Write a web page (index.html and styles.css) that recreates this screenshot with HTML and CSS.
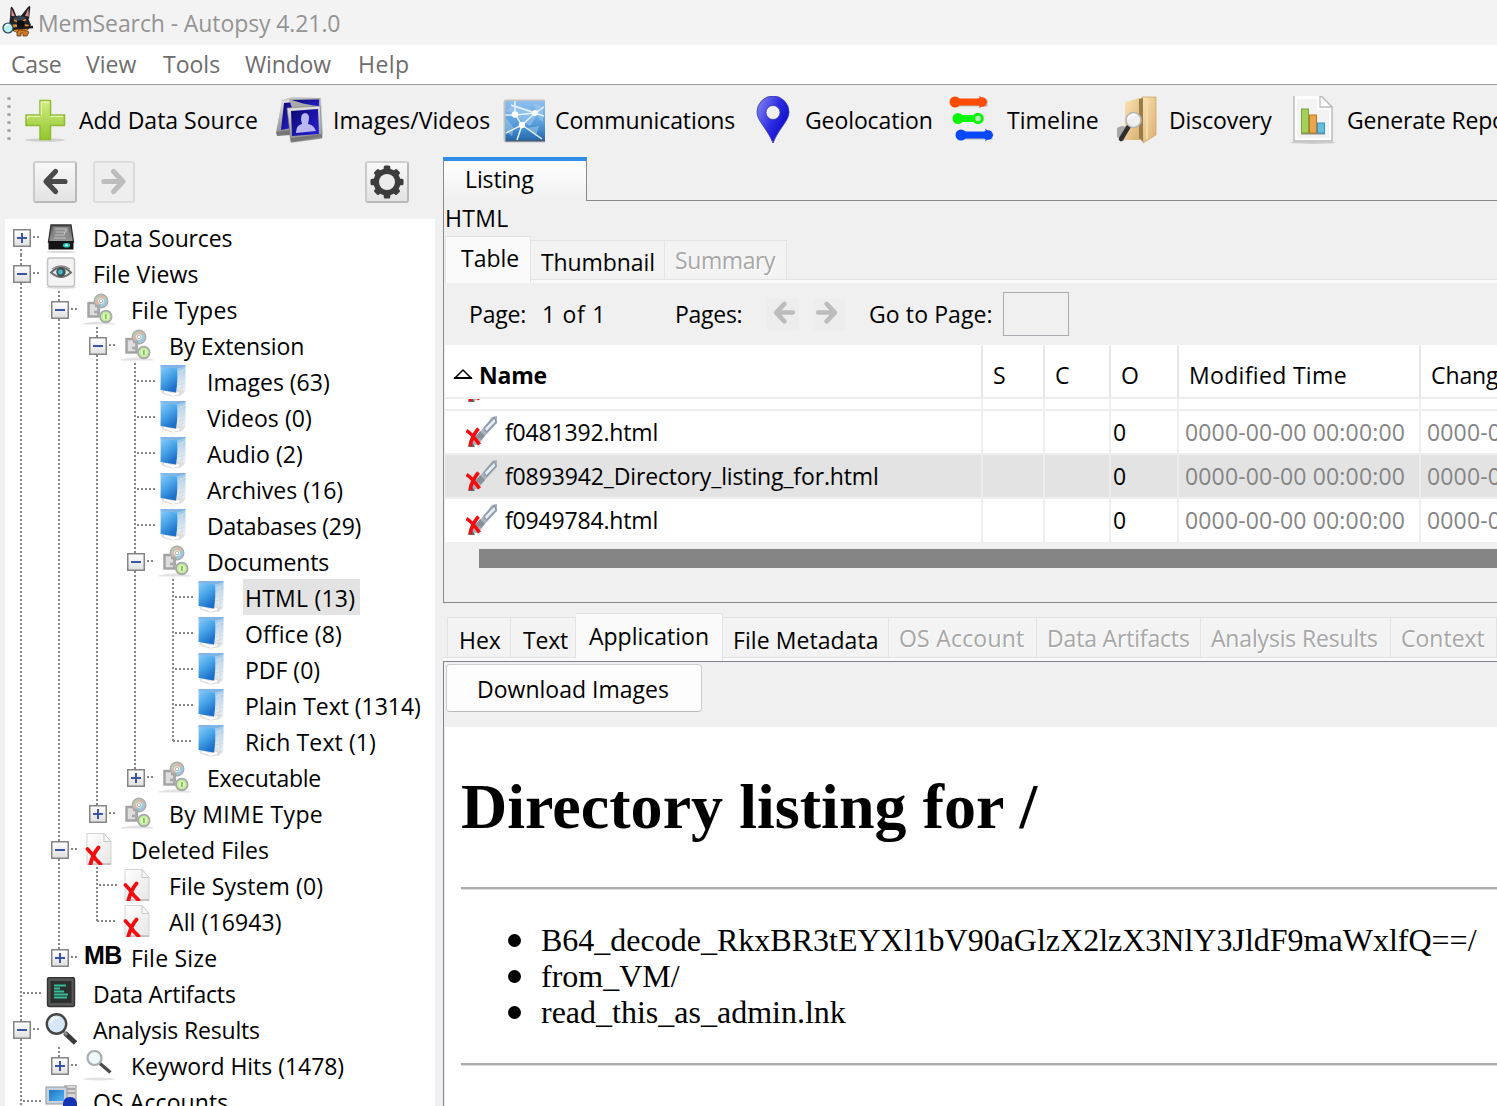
FILE: index.html
```html
<!DOCTYPE html>
<html lang="en">
<head>
<meta charset="utf-8">
<title>MemSearch - Autopsy 4.21.0</title>
<link rel="stylesheet" href="styles.css">
</head>
<body>
<svg class="defs" aria-hidden="true">
  <defs>
    <linearGradient id="gPlus" x1="0" y1="0" x2="0" y2="1"><stop offset="0" stop-color="#d2ec86"/><stop offset="1" stop-color="#94c52c"/></linearGradient>
    <linearGradient id="gNavy" x1="0" y1="0" x2="1" y2="1"><stop offset="0" stop-color="#0a0870"/><stop offset="1" stop-color="#2a20d8"/></linearGradient>
    <linearGradient id="gSilver" x1="0" y1="0" x2="0" y2="1"><stop offset="0" stop-color="#e4e4e4"/><stop offset="1" stop-color="#8c8c8c"/></linearGradient>
    <linearGradient id="gSky" x1="0" y1="0" x2="0" y2="1"><stop offset="0" stop-color="#8fc0ee"/><stop offset=".55" stop-color="#5a9fdb"/><stop offset="1" stop-color="#2166ac"/></linearGradient>
    <linearGradient id="gPin" x1="0" y1="0" x2="1" y2=".6"><stop offset="0" stop-color="#8a8af5"/><stop offset=".6" stop-color="#2a2ae0"/><stop offset="1" stop-color="#0c0cc8"/></linearGradient>
    <linearGradient id="gTan" x1="0" y1="0" x2="1" y2="1"><stop offset="0" stop-color="#fce3b4"/><stop offset="1" stop-color="#d9b070"/></linearGradient>
    <linearGradient id="gFolder" x1="0" y1="0" x2=".5" y2="1"><stop offset="0" stop-color="#8fcdf8"/><stop offset=".5" stop-color="#4ba6ea"/><stop offset="1" stop-color="#1c70c8"/></linearGradient>
    <linearGradient id="gLid" x1="0" y1="0" x2="0" y2="1"><stop offset="0" stop-color="#8fc4f0"/><stop offset=".5" stop-color="#cfe5f7"/><stop offset="1" stop-color="#f4f4f4"/></linearGradient>
    <linearGradient id="gPaper" x1="0" y1="0" x2="1" y2="1"><stop offset="0" stop-color="#ffffff"/><stop offset="1" stop-color="#e6e6e6"/></linearGradient>
    <linearGradient id="gDisc" x1="0" y1="0" x2="1" y2="1"><stop offset="0" stop-color="#a9d8b8"/><stop offset=".4" stop-color="#e8b0a0"/><stop offset=".7" stop-color="#8fd6d8"/><stop offset="1" stop-color="#b9b6e6"/></linearGradient>
    <linearGradient id="gBox" x1="0" y1="0" x2="0" y2="1"><stop offset="0" stop-color="#ffffff"/><stop offset="1" stop-color="#dfdfdf"/></linearGradient>
    <linearGradient id="gDrive" x1="0" y1="0" x2="0" y2="1"><stop offset="0" stop-color="#5a5a5a"/><stop offset="1" stop-color="#9a9a9a"/></linearGradient>
    <linearGradient id="gScreen" x1="0" y1="0" x2="1" y2="1"><stop offset="0" stop-color="#1b74c4"/><stop offset="1" stop-color="#58b4f2"/></linearGradient>

    <symbol id="dog" viewBox="0 0 32 32">
      <path d="M8 13 8.500 3Q9 -2 12 4l3 8zM18 11 26 1q3-3 2 3l-1 9z" fill="#191c24"/>
      <path d="M9.500 10 9.500 2.500l3.500 8zM23 10l3.500-8 .2 8.500z" fill="#d98f86"/>
      <path d="M8 12q9-5 18 0l3 7-3 5-8 4-7-3-4-6z" fill="#20242e"/>
      <path d="M11 12q7-4 13 0l-3 2h-7z" fill="#3b4452"/>
      <path d="M12 14l3 1.500M24 13.500l-3 1.500" stroke="#e58a2c" stroke-width="1.600"/>
      <path d="M10 19q4-2 7 1 5-3 10-1l-2 6q-7 3-13 0z" fill="#e58a2c"/>
      <path d="M15 15h7l1 6-4 2-4-2z" fill="#0c0e13"/>
      <path d="M8 23 31 21" stroke="#1a1a1a" stroke-width="2.400"/>
      <path d="M15 26v4h4v-3h2v3h4l2-4-5-2-5 0z" fill="#d27a22" stroke="#512a08" stroke-width=".7"/>
      <circle cx="6" cy="22" r="5" fill="#b6eef8" stroke="#26414c" stroke-width="1.200"/>
      <path d="M3 21q1-3 4-2" stroke="#fff" fill="none" stroke-width="1.200"/>
    </symbol>

    <symbol id="plus" viewBox="0 0 48 48">
      <ellipse cx="23" cy="44" rx="20" ry="1.800" fill="#d0d0d0"/>
      <path d="M18 4.500h10.500v14.500h14v10.500h-14v14H18v-14H4V19h14z" fill="url(#gPlus)" stroke="#8fba31" stroke-width="1.500"/>
      <path d="M19.300 19V6h8M5.500 23v-2.700h13M29 20.300h12" stroke="#e4f5b2" stroke-width="1.300" fill="none"/>
    </symbol>

    <symbol id="photos" viewBox="0 0 48 48">
      <path d="M7 4 17 1l29 1 2 36-3 5-29 4-2-8L1 38z" fill="#9c9c9c" opacity=".45"/>
      <path d="M7 5 22 3l-4 35L1 37z" fill="url(#gSilver)"/>
      <path d="M9 7l10-1-3 26-10 2z" fill="url(#gNavy)"/>
      <path d="M14 3 45 2l1 14-27 2z" fill="#a9a9a9"/>
      <path d="M17 4l27-.5v7L28 7.500z" fill="url(#gNavy)"/>
      <path d="M12 12l33-2 2 32-31 4z" fill="url(#gSilver)" stroke="#7a7a7a" stroke-width=".6"/>
      <path d="M16 15l27-2 1 25-27 2z" fill="url(#gNavy)"/>
      <path d="M21 37q0-8 6-9-3-10 3-11 6 0 3 11 6 1 8 7z" fill="#b9b6f2"/>
      <path d="M1 36l14-2v5L2 40zM16 42l31-4v3l-31 5z" fill="#777"/>
    </symbol>

    <symbol id="network" viewBox="0 0 48 48">
      <rect x="6.500" y="3.500" width="43" height="43" rx="3" fill="#c2c2c2"/>
      <rect x="8.500" y="5" width="39.500" height="40" rx="2" fill="url(#gSky)"/>
      <path d="M8.500 43.500h39.500v2H8.500z" fill="#3f5f80"/>
      <path d="M9 15q8-10 18-3l7 1 5 8-6 9-7-4-6-5zM37 8l9 2v16l-5-4zM9 22l8 10-2 8-6-5zM30 32l12-2-3 10z" fill="#a8d0f2" opacity=".5"/>
      <path d="M18 5v13l7 11-5 15M8.500 19l9.500 0 20-2 9-6M25 29l13-12 9 3M25 29 9 37M25 29l20 14M14 9l24 8" stroke="#e6f3fe" stroke-width="1.500" fill="none"/>
      <circle cx="18" cy="18.500" r="3.200" fill="#fff"/><circle cx="38" cy="17" r="2.900" fill="#fff"/><circle cx="25" cy="29" r="3.200" fill="#fff"/>
    </symbol>

    <symbol id="pin" viewBox="0 0 48 48">
      <path fill-rule="evenodd" d="M25 0a16 16 0 0 1 16 16c0 9-10 16-16 31C19 32 9 25 9 16A16 16 0 0 1 25 0zm0 9.500a7 7 0 1 0 0 14 7 7 0 0 0 0-14z" fill="url(#gPin)" stroke="#3a3aa8" stroke-width=".8"/>
    </symbol>

    <symbol id="timeline" viewBox="0 0 48 48">
      <g opacity=".35" fill="#555" transform="translate(1.500 1.500)"><rect x="5" y="2" width="32" height="7"/><rect x="10" y="35" width="32" height="7"/></g>
      <path d="M6 2.500h25l-1-3 8.500 6.500-8.500 6.500 1-3H6z" fill="#ff4c05"/><circle cx="6" cy="6" r="5.500" fill="#ff4c05"/><circle cx="33" cy="6" r="4.800" fill="#ff4c05"/>
      <path d="M9 19h15v7H9z" fill="#08f808"/><circle cx="9" cy="22.500" r="5.500" fill="#08f808"/><circle cx="29" cy="22.500" r="4.300" fill="#bfe6bf" stroke="#08f808" stroke-width="3"/>
      <path d="M11 35.500h26l-1-3 8.500 6.500-8.500 6.500 1-3H11z" fill="#0848fb"/><circle cx="12" cy="39" r="5.500" fill="#0848fb"/><circle cx="39" cy="39" r="4.800" fill="#0848fb"/>
    </symbol>

    <symbol id="discovery" viewBox="0 0 48 48">
      <path d="M14 6 29 2v42l-15 0z" fill="url(#gTan)"/>
      <path d="M31 1l14 0v38l-13 8z" fill="url(#gTan)" stroke="#c9a266" stroke-width=".7"/>
      <path d="M28 3l4-1v44l-4-4z" fill="#9a7c4c"/>
      <path d="M36 3v40" stroke="#f7dca8" stroke-width="2"/>
      <path d="M6 32q6-4 11 0l-4 13-7-4z" fill="#777" opacity=".6"/>
      <path d="M18 30 10 43" stroke="#2e2e2e" stroke-width="4.500" stroke-linecap="round"/>
      <circle cx="22.500" cy="24" r="7.500" fill="#efefef" stroke="#b5b5b5" stroke-width="1.600"/>
      <path d="M17 23q2-5 8-4" stroke="#fff" stroke-width="2" fill="none"/>
    </symbol>

    <symbol id="report" viewBox="0 0 48 48">
      <ellipse cx="24" cy="46.500" rx="23" ry="1.500" fill="#cfcfcf"/>
      <path d="M5 -1h26l12 12v34H5z" fill="#fdfdfd" stroke="#bcbcbc" stroke-width="1.500"/>
      <path d="M8 3h20v11h12v28H8z" fill="#f3f3f3"/>
      <path d="M31 -1v12h12z" fill="#fff" stroke="#bcbcbc" stroke-width="1.300"/>
      <path d="M12 37.500h24" stroke="#8b8b8b" stroke-width="2"/>
      <rect x="12.500" y="13" width="7" height="24" fill="#a4cf5a" stroke="#7ba436"/>
      <rect x="20.500" y="19" width="7" height="18" fill="#eda54d" stroke="#bf7624"/>
      <rect x="28.500" y="27" width="7" height="10" fill="#65bfe2" stroke="#3794bd"/>
    </symbol>

    <symbol id="arrow" viewBox="0 0 32 32">
      <path d="M16.500 5.500 7 15.500 16.500 25.500M8 15.500h18" fill="none" stroke="currentColor" stroke-width="5.200" stroke-linejoin="round" stroke-linecap="round"/>
    </symbol>

    <symbol id="gear" viewBox="0 0 36 36">
      <g fill="#3c3c3c"><circle cx="18" cy="18" r="13.500"/>
      <rect x="14.700" y="1.500" width="6.600" height="33" rx="1.500"/><rect x="1.500" y="14.700" width="33" height="6.600" rx="1.500"/>
      <rect x="14.700" y="2" width="6.600" height="32" rx="1.500" transform="rotate(45 18 18)"/><rect x="14.700" y="2" width="6.600" height="32" rx="1.500" transform="rotate(-45 18 18)"/></g>
      <circle cx="18" cy="18" r="8" fill="#ececec"/>
    </symbol>

    <symbol id="drive" viewBox="0 0 32 32">
      <ellipse cx="16" cy="31" rx="15" ry="1.200" fill="#dcdcdc"/>
      <path d="M6 4h20l2.500 17h-25z" fill="url(#gDrive)" stroke="#333" stroke-width="1.300"/>
      <path d="M8.500 6h15l1.500 12H7.500z" fill="#8b8b8b"/>
      <path d="M10 8h11v3H11M10 14h9l1-3M9 17h12" stroke="#c2c2c2" stroke-width="1.200" fill="none"/>
      <path d="M3.500 20h25v8.500h-25z" fill="#141414"/>
      <ellipse cx="21.500" cy="24.300" rx="3.600" ry="2.300" fill="#22c5b8"/><ellipse cx="21.500" cy="24.300" rx="1.600" ry="1" fill="#c8fff8"/>
    </symbol>

    <symbol id="views" viewBox="0 0 32 32">
      <ellipse cx="16" cy="30.500" rx="15" ry="1.300" fill="#dedede"/>
      <rect x="2.500" y="1" width="27" height="28.500" rx="2.500" fill="#f3f3f3" stroke="#c4c4c4" stroke-width="1.500"/>
      <path d="M6 15.500q10-10 20 0-10 9-20 0z" fill="#e6eaea" stroke="#6a6a6a" stroke-width="1.800"/>
      <path d="M7 12q9-6 18 0" fill="none" stroke="#8a8a8a" stroke-width="1.300"/>
      <circle cx="16" cy="15" r="4.700" fill="#3d5157"/><circle cx="15.500" cy="15" r="2.400" fill="#3fb9cb"/>
    </symbol>

    <symbol id="types" viewBox="0 0 32 32">
      <path d="M0 30.500q16-4 32 0v1H0z" fill="#e2e2e2"/>
      <rect x="5.500" y="10" width="10" height="13.500" fill="#dedede" stroke="#a2a2a2" stroke-width="2.400"/>
      <circle cx="18" cy="8" r="5.500" fill="#f2f2f2" stroke="#adadad" stroke-width="4"/>
      <circle cx="18" cy="8" r="4.400" fill="none" stroke="url(#gDisc)" stroke-width="3.200"/>
      <circle cx="18" cy="8" r="1.700" fill="#fff" stroke="#aaa" stroke-width=".8"/>
      <path d="M12 13h4v6h-5" fill="none" stroke="#a8a8a8" stroke-width="2.400"/>
      <circle cx="22.800" cy="23.500" r="5.700" fill="#e2f7ca" stroke="#a8a8a8" stroke-width="2"/>
      <circle cx="22.800" cy="23.500" r="4" fill="none" stroke="#bdeb94" stroke-width="1.600"/><rect x="21.900" y="21" width="1.900" height="5" fill="#7fc94a"/>
    </symbol>

    <symbol id="folder" viewBox="0 0 32 32">
      <path d="M2 0h24.500v25l-4 5-6-3z" fill="url(#gLid)"/>
      <path d="M19 8l7-4M19 12l7-3M19 16l7-2M19 20l7-2M19 24l6-2M23 5v23" stroke="#dadada" stroke-width="1.100"/>
      <path d="M2 26l2 3 9 2.500 9-1 4.500-4.500-9-2z" fill="#dedede"/><path d="M5 26.500l9 3 6-1.500" stroke="#fff" stroke-width="2.200" fill="none"/>
      <path d="M1.500 1 18 3.500q1 13-1 24L1.500 25Q1.800 12 1.500 1z" fill="url(#gFolder)"/>
      <path d="M1.500 0H20l6.500 0v1L18 3.500 1.500 1.500z" fill="#7fb4e4"/>
    </symbol>

    <symbol id="deleted" viewBox="0 0 32 32">
      <path d="M4 .5h17l7 8v23H4z" fill="url(#gPaper)" stroke="#d3d3d3" stroke-width="1"/>
      <path d="M21 .5v8h7z" fill="#f7f7f7" stroke="#c9c9c9" stroke-width="1"/>
      <path d="M5 31h23" stroke="#bdbdbd" stroke-width="1.500"/>
      <path d="M4.500 16q5 5 8 10l5 5M15.500 14.500Q10 21 7.500 31" fill="none" stroke="#f30d10" stroke-width="3.800" stroke-linecap="round"/>
    </symbol>

    <symbol id="artifacts" viewBox="0 0 32 32">
      <rect x="2.500" y=".5" width="27" height="29" rx="2" fill="#565656" stroke="#333" stroke-width="1.400"/>
      <rect x="5.500" y="4" width="21" height="22" fill="#2b2f2e"/>
      <path d="M9 8.500h12M9 11.500h6M9 14.500h10M9 17.500h14M9 20.500h13" stroke="#35bd95" stroke-width="2.200"/>
    </symbol>

    <symbol id="magnifier" viewBox="0 0 32 32">
      <path d="M20 20l10.500 10" stroke="#3b3b3b" stroke-width="5"/>
      <path d="M18 18l4 4" stroke="#8a8a8a" stroke-width="3"/>
      <circle cx="11.500" cy="11" r="9.700" fill="#d6e7fb" stroke="#454545" stroke-width="2.400"/>
      <path d="M5.500 10q2-6 8-5" stroke="#fff" stroke-width="2" fill="none"/>
    </symbol>

    <symbol id="keyword" viewBox="0 0 32 32">
      <ellipse cx="16" cy="30" rx="16" ry="1.500" fill="#e3e3e3"/>
      <path d="M17 14.500l10.500 9" stroke="#4c4c4c" stroke-width="3.400"/>
      <circle cx="11.500" cy="9" r="7" fill="#eef8f8" stroke="#a8adad" stroke-width="2.200"/>
    </symbol>

    <symbol id="accounts" viewBox="0 0 32 32">
      <path d="M20 0h11v30H20z" fill="#d6d6d6" stroke="#9a9a9a"/><path d="M22 4h8M22 8h8" stroke="#999" stroke-width="1.500"/>
      <rect x="1" y="2" width="21" height="17" fill="#c9d2da" stroke="#8e979f"/><rect x="4" y="5" width="15" height="11" fill="url(#gScreen)"/>
      <path d="M18 20q0-8 7-8t7 8v12H16z" fill="#1733b5"/>
    </symbol>

    <symbol id="carved" viewBox="0 0 32 32">
      <path d="M31 0v7L19 20l-6 8-9 3-1-6 11-9L26 1z" fill="#a9b3bd"/>
      <path d="M28.500 1.500 18 12.500l2.500 3.500L30 6z" fill="#e6edf3" stroke="#8996a4" stroke-width="1.200"/>
      <path d="M14 15l5 5-4 4-5-3z" fill="#8a9098"/>
      <path d="M2 31l3-6 4 6z" fill="#666"/>
      <path d="M.5 14.500q6 4 13 14M12.500 12.500Q6 20 4 30" fill="none" stroke="#f30d10" stroke-width="3.600"/>
    </symbol>

    <symbol id="minus-box" viewBox="0 0 18 18"><rect x=".75" y=".75" width="16.500" height="16.500" fill="url(#gBox)" stroke="#858585" stroke-width="1.500"/><path d="M4 9h10" stroke="#3a55a0" stroke-width="2"/></symbol>
    <symbol id="plus-box" viewBox="0 0 18 18"><rect x=".75" y=".75" width="16.500" height="16.500" fill="url(#gBox)" stroke="#858585" stroke-width="1.500"/><path d="M4 9h10M9 4v10" stroke="#3a55a0" stroke-width="2"/></symbol>
  </defs>
</svg>

<header class="titlebar"><svg class="logo"><use href="#dog"/></svg><span class="n1">MemSearch - Autopsy 4.21.0</span></header>
<nav class="menubar">
  <span class="m-case n2">Case</span><span class="m-view">View</span><span class="m-tools">Tools</span><span class="m-window n2">Window</span><span class="p4">Help</span>
</nav>
<div class="toolbar">
  <div class="grip"><i></i><i></i><i></i><i></i><i></i><i></i></div>
  <div class="tools">
    <div class="tool"><svg><use href="#plus"/></svg><span>Add Data Source</span></div>
    <div class="tool"><svg><use href="#photos"/></svg><span class="shift p0">Images/Videos</span></div>
    <div class="tool"><svg><use href="#network"/></svg><span class="shift n1">Communications</span></div>
    <div class="tool"><svg><use href="#pin"/></svg><span class="n1">Geolocation</span></div>
    <div class="tool"><svg><use href="#timeline"/></svg><span class="shift p0">Timeline</span></div>
    <div class="tool"><svg><use href="#discovery"/></svg><span class="shift n1">Discovery</span></div>
    <div class="tool"><svg><use href="#report"/></svg><span class="shift n2">Generate Report</span></div>
  </div>
</div>

<div class="workspace">
  <aside class="sidebar">
    <div class="navbuttons">
      <div class="navbtn back"><svg><use href="#arrow"/></svg></div>
      <div class="navbtn forward"><svg><use href="#arrow"/></svg></div>
      <div class="navbtn options"><svg><use href="#gear"/></svg></div>
    </div>
    <div class="tree">
      <div class="row"><i class="cell down box"><svg><use href="#plus-box"/></svg></i><svg class="ic"><use href="#drive"/></svg><span class="lb n2">Data Sources</span></div>
      <div class="row"><i class="cell full box"><svg><use href="#minus-box"/></svg></i><svg class="ic"><use href="#views"/></svg><span class="lb p2">File Views</span></div>
      <div class="row"><i class="cell full"></i><i class="cell full box"><svg><use href="#minus-box"/></svg></i><svg class="ic"><use href="#types"/></svg><span class="lb p2">File Types</span></div>
      <div class="row"><i class="cell full"></i><i class="cell full"></i><i class="cell full box"><svg><use href="#minus-box"/></svg></i><svg class="ic"><use href="#types"/></svg><span class="lb n2">By Extension</span></div>
      <div class="row"><i class="cell full"></i><i class="cell full"></i><i class="cell full"></i><i class="cell full leaf"></i><svg class="ic"><use href="#folder"/></svg><span class="lb">Images (63)</span></div>
      <div class="row"><i class="cell full"></i><i class="cell full"></i><i class="cell full"></i><i class="cell full leaf"></i><svg class="ic"><use href="#folder"/></svg><span class="lb p1">Videos (0)</span></div>
      <div class="row"><i class="cell full"></i><i class="cell full"></i><i class="cell full"></i><i class="cell full leaf"></i><svg class="ic"><use href="#folder"/></svg><span class="lb p1">Audio (2)</span></div>
      <div class="row"><i class="cell full"></i><i class="cell full"></i><i class="cell full"></i><i class="cell full leaf"></i><svg class="ic"><use href="#folder"/></svg><span class="lb">Archives (16)</span></div>
      <div class="row"><i class="cell full"></i><i class="cell full"></i><i class="cell full"></i><i class="cell full leaf"></i><svg class="ic"><use href="#folder"/></svg><span class="lb n3">Databases (29)</span></div>
      <div class="row"><i class="cell full"></i><i class="cell full"></i><i class="cell full"></i><i class="cell full box"><svg><use href="#minus-box"/></svg></i><svg class="ic"><use href="#types"/></svg><span class="lb n1">Documents</span></div>
      <div class="row"><i class="cell full"></i><i class="cell full"></i><i class="cell full"></i><i class="cell full"></i><i class="cell full leaf"></i><svg class="ic"><use href="#folder"/></svg><span class="lb p2 selected">HTML (13)</span></div>
      <div class="row"><i class="cell full"></i><i class="cell full"></i><i class="cell full"></i><i class="cell full"></i><i class="cell full leaf"></i><svg class="ic"><use href="#folder"/></svg><span class="lb p1">Office (8)</span></div>
      <div class="row"><i class="cell full"></i><i class="cell full"></i><i class="cell full"></i><i class="cell full"></i><i class="cell full leaf"></i><svg class="ic"><use href="#folder"/></svg><span class="lb">PDF (0)</span></div>
      <div class="row"><i class="cell full"></i><i class="cell full"></i><i class="cell full"></i><i class="cell full"></i><i class="cell full leaf"></i><svg class="ic"><use href="#folder"/></svg><span class="lb n0">Plain Text (1314)</span></div>
      <div class="row"><i class="cell full"></i><i class="cell full"></i><i class="cell full"></i><i class="cell full"></i><i class="cell up leaf"></i><svg class="ic"><use href="#folder"/></svg><span class="lb p1">Rich Text (1)</span></div>
      <div class="row"><i class="cell full"></i><i class="cell full"></i><i class="cell full"></i><i class="cell up box"><svg><use href="#plus-box"/></svg></i><svg class="ic"><use href="#types"/></svg><span class="lb n3">Executable</span></div>
      <div class="row"><i class="cell full"></i><i class="cell full"></i><i class="cell up box"><svg><use href="#plus-box"/></svg></i><svg class="ic"><use href="#types"/></svg><span class="lb p3">By MIME Type</span></div>
      <div class="row"><i class="cell full"></i><i class="cell full box"><svg><use href="#minus-box"/></svg></i><svg class="ic"><use href="#deleted"/></svg><span class="lb p1">Deleted Files</span></div>
      <div class="row"><i class="cell full"></i><i class="cell full"></i><i class="cell full leaf"></i><svg class="ic"><use href="#deleted"/></svg><span class="lb p1">File System (0)</span></div>
      <div class="row"><i class="cell full"></i><i class="cell full"></i><i class="cell up leaf"></i><svg class="ic"><use href="#deleted"/></svg><span class="lb p1">All (16943)</span></div>
      <div class="row"><i class="cell full"></i><i class="cell up box"><svg><use href="#plus-box"/></svg></i><b class="ic mb">MB</b><span class="lb p2">File Size</span></div>
      <div class="row"><i class="cell full leaf"></i><svg class="ic"><use href="#artifacts"/></svg><span class="lb n2">Data Artifacts</span></div>
      <div class="row"><i class="cell full box"><svg><use href="#minus-box"/></svg></i><svg class="ic"><use href="#magnifier"/></svg><span class="lb n2">Analysis Results</span></div>
      <div class="row"><i class="cell full"></i><i class="cell up box"><svg><use href="#plus-box"/></svg></i><svg class="ic"><use href="#keyword"/></svg><span class="lb n0">Keyword Hits (1478)</span></div>
      <div class="row"><i class="cell full leaf"></i><svg class="ic"><use href="#accounts"/></svg><span class="lb p1">OS Accounts</span></div>
    </div>
  </aside>

  <main class="content">
    <div class="doc-tabs"><div class="doc-tab n1">Listing</div><div class="doc-rest"></div></div>
    <section class="listing">
      <div class="path p3">HTML</div>
      <div class="tabs">
        <div class="tab active t-table">Table</div><div class="tab t-thumb n1">Thumbnail</div><div class="tab disabled t-sum n4">Summary</div>
      </div>
      <div class="pager">
        <span class="pg-label n2">Page:</span><span class="pg-count">1 of 1</span><span class="pg-pages n3">Pages:</span>
        <div class="pg-btn"><svg><use href="#arrow"/></svg></div><div class="pg-btn next"><svg><use href="#arrow"/></svg></div>
        <span class="pg-goto p1">Go to Page:</span><div class="pg-input"></div>
      </div>
      <div class="table">
        <div class="tr head"><div class="name"><svg viewBox="0 0 20 12"><path d="M2 10 10 2l8 8z" fill="#fff" stroke="#000" stroke-width="1.500"/><path d="M1 10h18" stroke="#000" stroke-width="2"/></svg>Name</div><div>S</div><div>C</div><div>O</div><div class="p3">Modified Time</div><div class="n1">Changed Time</div></div>
        <div class="tr partial"><div><svg class="ficon"><use href="#carved"/></svg></div><div></div><div></div><div></div><div></div><div></div></div>
        <div class="tr"><div><svg class="ficon"><use href="#carved"/></svg><span class="n2">f0481392.html</span></div><div></div><div></div><div>0</div><div class="date">0000-00-00 00:00:00</div><div class="date">0000-00-00 00:00:00</div></div>
        <div class="tr current"><div><svg class="ficon"><use href="#carved"/></svg><span class="nl">f0893942_Directory_listing_for.html</span></div><div></div><div></div><div>0</div><div class="date">0000-00-00 00:00:00</div><div class="date">0000-00-00 00:00:00</div></div>
        <div class="tr last"><div><svg class="ficon"><use href="#carved"/></svg><span class="n2">f0949784.html</span></div><div></div><div></div><div>0</div><div class="date">0000-00-00 00:00:00</div><div class="date">0000-00-00 00:00:00</div></div>
      </div>
      <div class="hscroll"></div>
    </section>

    <div class="tabs lower">
      <div class="tab w-hex">Hex</div><div class="tab w-text n2">Text</div><div class="tab active w-app">Application</div><div class="tab w-meta p0">File Metadata</div><div class="tab disabled w-os p2">OS Account</div><div class="tab disabled w-art n2">Data Artifacts</div><div class="tab disabled w-res n2">Analysis Results</div><div class="tab disabled w-ctx">Context</div>
    </div>
    <section class="viewer">
      <div class="actions"><button>Download Images</button></div>
      <article class="page">
        <h1>Directory listing for /</h1>
        <hr>
        <ul>
          <li>B64_decode_RkxBR3tEYXl1bV90aGlzX2lzX3NlY3JldF9maWxlfQ==/</li>
          <li>from_VM/</li>
          <li>read_this_as_admin.lnk</li>
        </ul>
        <hr>
      </article>
    </section>
  </main>
</div>
</body>
</html>
```
FILE: styles.css
```css
* { box-sizing: border-box; }
html, body { margin: 0; height: 1106px; overflow: hidden; }
body {
  width: 1497px;
  display: flex;
  flex-direction: column;
  background: #f0f0f0;
  color: #000;
  font-family: "Open Sans", sans-serif;
  font-size: 23px;
  white-space: nowrap;
}
svg { display: block; flex: none; overflow: visible; }
.defs { position: absolute; width: 0; height: 0; overflow: hidden; }

/* tracking steps */
.n4 { letter-spacing: -.4px; }
.n3 { letter-spacing: -.28px; }
.n2 { letter-spacing: -.17px; }
.nl { letter-spacing: -.135px; }
.n1 { letter-spacing: -.1px; }
.n0 { letter-spacing: -.03px; }
.p0 { letter-spacing: .06px; }
.p1 { letter-spacing: .1px; }
.p2 { letter-spacing: .22px; }
.p3 { letter-spacing: .33px; }
.p4 { letter-spacing: .45px; }

.titlebar { height: 45px; flex: none; display: flex; align-items: center; background: #f3f3f3; color: #949494; }
.logo { width: 32px; height: 32px; margin: 0 4px 2px 2px; }
.menubar { height: 40px; flex: none; display: flex; align-items: center; padding: 1px 0 2px 11px; background: #fff; border-bottom: 1px solid #989898; color: #6d6d6d; }
.m-case { width: 75px; }
.m-view { width: 77px; }
.m-tools { width: 82px; }
.m-window { width: 113px; }

.toolbar { height: 72px; flex: none; display: flex; }
.grip { width: 22px; padding: 12px 0 0 7px; display: flex; flex-direction: column; gap: 5px; }
.grip i { width: 4px; height: 3px; border-radius: 50%; background: #a4a4a4; }
.tools { display: grid; grid-template-columns: 253px 222px 251px 201px 162px 178px 208px; height: 70px; align-items: center; }
.tool { display: flex; align-items: center; gap: 9px; }
.tool svg { width: 48px; height: 48px; }
.shift { margin-left: 1px; }

.workspace { flex: 1; min-height: 0; display: flex; }
.sidebar { width: 443px; flex: none; padding-left: 5px; }
.navbuttons { height: 62px; padding: 4px 0 0 28px; display: flex; }
.navbtn { width: 44px; height: 42px; border: 2px solid #b9b9b9; border-top-color: #d0d0d0; border-left-color: #cacaca; border-radius: 3px; background: linear-gradient(#f8f8f8, #e3e3e3); display: flex; align-items: center; justify-content: center; color: #4a4a4a; }
.navbtn svg { width: 32px; height: 32px; }
.forward { margin-left: 16px; width: 42px; color: #bdbdbd; border-color: #dcdcdc; background: #eee; }
.forward svg, .next svg { transform: scaleX(-1); }
.options { margin-left: 230px; }
.navbtn.options svg { width: 36px; height: 36px; }

.tree { width: 430px; height: 887px; background: #fff; overflow: hidden; }
.row { display: flex; height: 36px; align-items: flex-start; }
.cell {
  --v: repeating-linear-gradient(#868686 0 2px, transparent 2px 4px);
  --h: repeating-linear-gradient(90deg, #868686 0 2px, transparent 2px 4px);
  width: 38px; height: 36px; flex: none; background-repeat: no-repeat;
}
.full { background-image: var(--v); background-size: 2px 36px; background-position: 15px 0; }
.box { padding: 10px 0 0 8px; }
.box svg { width: 18px; height: 18px; }
.full.box { background-image: var(--v), var(--h); background-size: 2px 36px, 8px 2px; background-position: 15px 0, 28px 17px; }
.up.box { background-image: var(--v), var(--h); background-size: 2px 18px, 8px 2px; background-position: 15px 0, 28px 17px; }
.down.box { background-image: var(--v), var(--h); background-size: 2px 18px, 8px 2px; background-position: 15px 18px, 28px 17px; }
.full.leaf { background-image: var(--v), var(--h); background-size: 2px 36px, 18px 2px; background-position: 15px 0, 18px 17px; }
.up.leaf { background-image: var(--v), var(--h); background-size: 2px 18px, 20px 2px; background-position: 15px 0, 16px 17px; }
.ic { width: 32px; height: 32px; margin: 2px 14px 0 2px; flex: none; }
.mb { font: bold 25px/29px "Liberation Sans", sans-serif; letter-spacing: -.5px; padding-left: 1px; }
.lb { height: 36px; line-height: 39px; padding: 0 5px 0 2px; }
.selected { background: #e3e3e3; }

.content { flex: 1; min-width: 0; display: flex; flex-direction: column; overflow: hidden; }
.doc-tabs { height: 44px; flex: none; display: flex; }
.doc-tab { width: 144px; line-height: 36px; padding: 0 0 0 21px; border: 1px solid #8a8a8a; border-top: 4px solid #2e8de6; border-bottom: 0; background: linear-gradient(#fff, #f0f0f0); }
.doc-rest { flex: 1; border-bottom: 1px solid #8a8a8a; }
.listing { height: 402px; flex: none; border-left: 1px solid #8a8a8a; border-bottom: 1px solid #8a8a8a; padding-left: 1px; display: flex; flex-direction: column; }
.path { height: 35px; line-height: 35px; padding-left: 0; flex: none; }

.tabs { height: 47px; flex: none; display: flex; align-items: flex-start; background: linear-gradient(#e3e3e3, #e3e3e3) 0 43px / 100% 1px no-repeat, linear-gradient(#f0f0f0, #f0f0f0) 0 0 / 100% 43px no-repeat, #fafafa; }
.tab { height: 40px; margin-top: 4px; background: #f3f3f3; border: 1px solid #e3e3e3; border-left: 0; line-height: 31px; padding: 6px 0 0 10px; flex: none; }
.tab.active { height: 47px; margin-top: 0; padding-top: 6px; background: #fafafa; border-left: 1px solid #e3e3e3; border-bottom: 0; }
.tab.disabled { color: #a7a7a7; text-shadow: 1px 1px 0 #fff; padding-top: 4px; }
.t-table { width: 86px; padding-left: 15px; }
.t-thumb { width: 134px; }
.t-sum { width: 122px; }

.pager { height: 62px; flex: none; display: flex; align-items: center; }
.pg-label { width: 73px; margin-left: 24px; }
.pg-count { width: 133px; letter-spacing: .7px; }
.pg-pages { width: 92px; }
.pg-btn { width: 32px; height: 31px; margin-right: 14px; background: #ededed; color: #bcbcbc; }
.pg-btn svg { width: 34px; height: 28px; }
.pg-btn.next svg { width: 28px; }
.pg-goto { width: 134px; margin-left: 10px; }
.pg-input { width: 66px; height: 44px; margin-top: -1px; border: 1px solid #a9abb0; }

.table { flex: none; width: 1052px; overflow: hidden; }
.tr { display: grid; grid-template-columns: 538px 62px 66px 68px 242px 290px; height: 44px; }
.tr > div { display: flex; align-items: center; background: #fff; border-right: 2px solid #eee; border-bottom: 2px solid #eee; padding-left: 2px; overflow: hidden; }
.tr > div:first-child { padding-left: 21px; }
.tr > .date { padding-left: 6px; color: #858585; letter-spacing: .16px; }
.tr.head { height: 54px; }
.tr.head > div { padding: 7px 0 0 10px; border-right-color: #e6e6e6; }
.tr.head > .name { padding-left: 8px; font-weight: bold; letter-spacing: -.2px; }
.name svg { width: 20px; height: 12px; margin: -2px 6px 0 0; }
.tr.partial { height: 12px; }
.tr.partial > div { align-items: flex-end; }
.tr.partial .ficon { margin-bottom: 6px; }
.tr.current > div { background: #e3e3e3; }
.tr.last > div { border-bottom: 0; }
.tr.last { height: 43px; }
.tr.last > div { padding-bottom: 1px; }
.ficon { width: 32px; height: 32px; margin-right: 7px; }
.hscroll { height: 19px; margin: 7px 0 0 34px; background: #858585; }

.lower { margin: 10px 0 0; padding-left: 4px; height: 48px; background: linear-gradient(#e3e3e3, #e3e3e3) 0 44px / 100% 1px no-repeat, linear-gradient(#f0f0f0, #f0f0f0) 0 0 / 100% 44px no-repeat, #fafafa; }
.lower .tab { margin-top: 4px; height: 41px; padding-top: 7px; }
.lower .tab.disabled { padding-top: 5px; }
.lower .tab.active { margin-top: 0; height: 48px; padding: 7px 0 0 13px; border-left: 0; }
.lower .w-hex { width: 64px; padding-left: 11px; border-left: 1px solid #e3e3e3; }
.w-text { width: 65px; padding-left: 12px; }
.w-app { width: 147px; }
.w-meta { width: 166px; }
.w-os { width: 148px; }
.w-art { width: 164px; }
.w-res { width: 190px; }
.w-ctx { width: 106px; }

.viewer { flex: 1; border-left: 1px solid #858090; border-top: 1px solid #858090; padding-left: 1px; display: flex; flex-direction: column; }
.actions { height: 65px; padding: 2px 0 0 1px; flex: none; }
.actions button { width: 256px; height: 48px; padding: 1px 2px 0 0; border: 1px solid #cdcdcd; border-bottom-color: #bababa; border-radius: 4px; background: #fdfdfd; color: #000; font-family: inherit; font-size: inherit; }
.page { flex: 1; background: #fff; padding: 44px 0 0 16px; font-family: "Liberation Serif", serif; }
.page h1 { margin: 0; font-size: 64px; line-height: 72px; font-weight: bold; letter-spacing: .04px; }
.page hr { height: 3px; border: 0; margin: 44px 0 0; background: linear-gradient(#acacac 0 2px, #dcdcdc 2px); }
.page ul { list-style: none; margin: 32px 0 0; padding: 0 0 0 47px; font-size: 32px; line-height: 36px; }
.page li { display: flex; align-items: center; }
.page li::before { content: ""; width: 13px; height: 13px; margin: 0 20px 0 0; border-radius: 50%; background: #000; }
.page ul + hr { margin-top: 33px; }
```
